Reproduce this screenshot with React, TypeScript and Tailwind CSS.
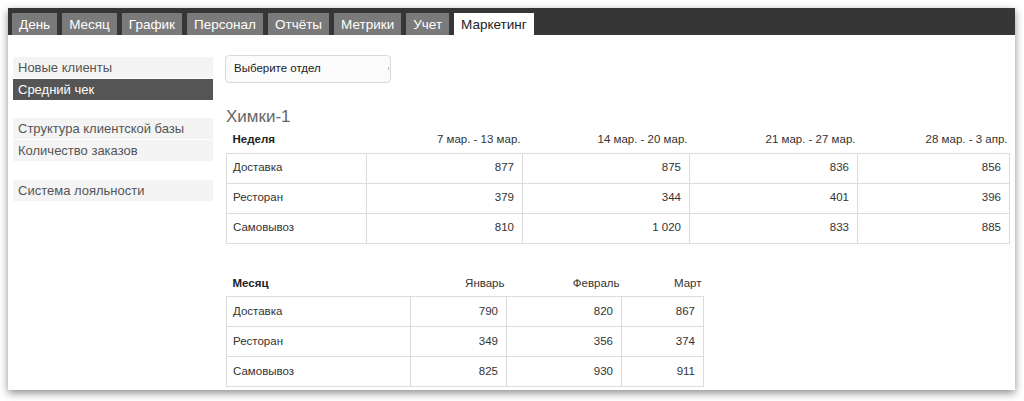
const tabs = ['День', 'Месяц', 'График', 'Персонал', 'Отчёты', 'Метрики', 'Учет', 'Маркетинг']

const weekCols = [140, 156, 167, 168, 152]
const weekHead = ['Неделя', '7 мар. - 13 мар.', '14 мар. - 20 мар.', '21 мар. - 27 мар.', '28 мар. - 3 апр.']
const weekRows = [
  ['Доставка', '877', '875', '836', '856'],
  ['Ресторан', '379', '344', '401', '396'],
  ['Самовывоз', '810', '1 020', '833', '885'],
]

const monthCols = [184, 96, 115, 82]
const monthHead = ['Месяц', 'Январь', 'Февраль', 'Март']
const monthRows = [
  ['Доставка', '790', '820', '867'],
  ['Ресторан', '349', '356', '374'],
  ['Самовывоз', '825', '930', '911'],
]

const DataTable = ({ cols, head, rows }: { cols: number[]; head: string[]; rows: string[][] }) => {
  const total = cols.reduce((a, b) => a + b, 0)
  return (
    <table className="table-fixed border-collapse text-[11.5px] text-[#333]" style={{ width: total }}>
      <colgroup>
        {cols.map((w, i) => (
          <col key={i} style={{ width: w }} />
        ))}
      </colgroup>
      <thead>
        <tr className="h-[26px]">
          {head.map((h, i) =>
            i === 0 ? (
              <th key={h} className="text-left font-bold pl-[6px] text-[#222]">{h}</th>
            ) : (
              <th key={h} className="text-right font-normal pr-[2px]">{h}</th>
            )
          )}
        </tr>
      </thead>
      <tbody>
        {rows.map(r => (
          <tr key={r[0]} className="h-[30px]">
            {r.map((c, i) => (
              <td
                key={i}
                className={`border border-[#dcdcdc] ${i === 0 ? 'text-left pl-[6px]' : 'text-right pr-[8px]'}`}
              >
                {c}
              </td>
            ))}
          </tr>
        ))}
      </tbody>
    </table>
  )
}

const SideItem = ({ label, active }: { label: string; active?: boolean }) => (
  <div
    className={`h-[21px] leading-[21px] pl-[5px] text-[13px] ${
      active ? 'bg-[#555555] text-white' : 'bg-[#f4f4f4] text-[#555]'
    }`}
  >
    {label}
  </div>
)

export default function App() {
  return (
    <div className="w-[1024px] h-[401px] bg-white pt-[8px] pl-[8px] font-['Liberation_Sans',Arial,sans-serif]">
      <div className="w-[1007px] h-[382px] bg-white shadow-[0_3px_8px_rgba(0,0,0,0.45)] overflow-hidden">
        {/* Tabs */}
        <div className="h-[27px] bg-[#363636] pt-[5px] pl-[4px] flex gap-[5px]">
          {tabs.map(t => (
            <div
              key={t}
              className={`h-[22px] leading-[23px] px-[7px] text-[13.5px] ${
                t === 'Маркетинг' ? 'bg-white text-[#222]' : 'bg-[#7a7a7a] text-white'
              }`}
            >
              {t}
            </div>
          ))}
        </div>

        <div className="flex pl-[5px]">
          {/* Sidebar */}
          <div className="w-[200px] mt-[22px] flex flex-col">
            <SideItem label="Новые клиенты" />
            <div className="h-px" />
            <SideItem label="Средний чек" active />
            <div className="h-[18px]" />
            <SideItem label="Структура клиентской базы" />
            <div className="h-px" />
            <SideItem label="Количество заказов" />
            <div className="h-[19px]" />
            <SideItem label="Система лояльности" />
          </div>

          {/* Main */}
          <div className="ml-[12px] mt-[20px] flex flex-col">
            <div className="relative w-[166px] h-[28px] border border-[#d9d9d9] rounded-[4px] bg-[#fbfbfb] flex items-center pl-[8px] text-[11.5px] text-[#222]">
              Выберите отдел
              <span className="absolute right-[1px] top-[11px] w-px h-[3px] bg-[#bbb]" />
            </div>

            <div className="mt-[24px] ml-[1px] h-[20px] leading-[20px] text-[17px] text-[#666]">Химки-1</div>

            <div className="ml-[1px]">
              <DataTable cols={weekCols} head={weekHead} rows={weekRows} />
            </div>

            <div className="ml-[1px] mt-[27px]">
              <DataTable cols={monthCols} head={monthHead} rows={monthRows} />
            </div>
          </div>
        </div>
      </div>
    </div>
  )
}
